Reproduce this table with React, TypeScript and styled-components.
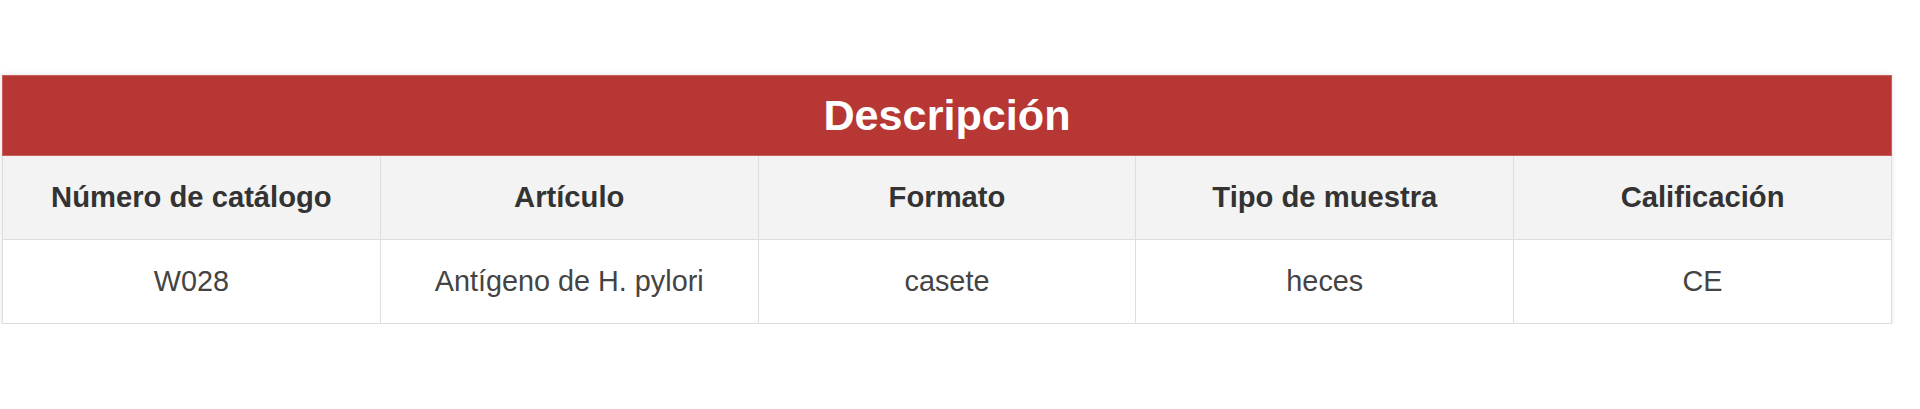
import React from 'react';
import styled, { createGlobalStyle } from 'styled-components';

const columns = ['Número de catálogo', 'Artículo', 'Formato', 'Tipo de muestra', 'Calificación'];

const rows = [['W028', 'Antígeno de H. pylori', 'casete', 'heces', 'CE']];

const App: React.FC = () => (
  <>
    <GlobalStyle />
    <Page>
      <Table>
        <thead>
          <tr>
            <Title colSpan={columns.length}>Descripción</Title>
          </tr>
          <tr>
            {columns.map((c) => (
              <HeadCell key={c}>{c}</HeadCell>
            ))}
          </tr>
        </thead>
        <tbody>
          {rows.map((r) => (
            <tr key={r[0]}>
              {r.map((v, i) => (
                <Cell key={i}>{v}</Cell>
              ))}
            </tr>
          ))}
        </tbody>
      </Table>
    </Page>
  </>
);
export default App;

/* ===== styled-components ===== */
const GlobalStyle = createGlobalStyle`
  html, body {
    margin: 0;
    background: #fff;
    font-family: 'Liberation Sans', Arial, sans-serif;
  }
`;

const Page = styled.div`
  padding: 75px 0 0 2px;
  width: 1890px;
`;

const Table = styled.table`
  width: 100%;
  table-layout: fixed;
  border-collapse: collapse;
  box-shadow: 0 0 5px rgba(0, 0, 0, 0.12);
`;

const Title = styled.th`
  height: 79px;
  padding: 0;
  background: #b73734;
  color: #fff;
  font-size: 43.2px;
  font-weight: 700;
  text-align: center;
  border: 1px solid #c9605d;
`;

const HeadCell = styled.th`
  height: 83px;
  padding: 0 8px;
  background: #f3f3f3;
  color: #333;
  font-size: 29.2px;
  font-weight: 700;
  text-align: center;
  border: 1px solid #dedede;
`;

const Cell = styled.td`
  height: 83px;
  padding: 0 8px;
  background: #fff;
  color: #444;
  font-size: 28.8px;
  text-align: center;
  border: 1px solid #dedede;
`;
